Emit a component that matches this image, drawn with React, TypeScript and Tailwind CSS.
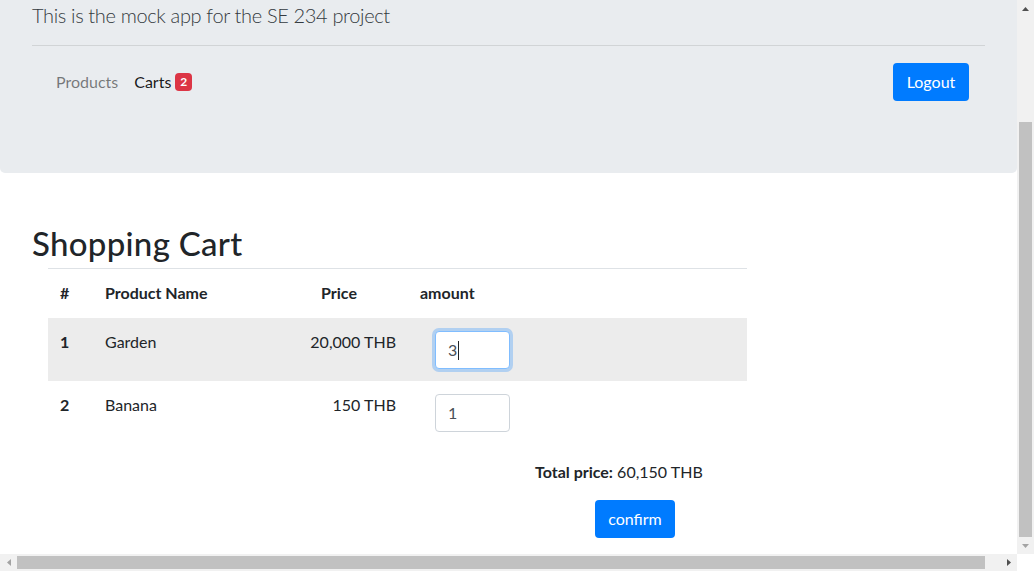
const cartItems = [
  { id: 1, name: 'Garden', price: '20,000 THB', amount: '3', focused: true },
  { id: 2, name: 'Banana', price: '150 THB', amount: '1', focused: false },
]

const font = 'font-["Lato","Noto_Sans",sans-serif]'

function Triangle({ dir, tone }: { dir: 'up' | 'down' | 'left' | 'right'; tone: string }) {
  const points = {
    up: '0,4 3.5,0 7,4',
    down: '0,0 7,0 3.5,4',
    left: '4,0 4,7 0,3.5',
    right: '0,0 4,3.5 0,7',
  }[dir]
  const size = dir === 'up' || dir === 'down' ? { w: 7, h: 4 } : { w: 4, h: 7 }
  return (
    <svg width={size.w} height={size.h} viewBox={`0 0 ${size.w} ${size.h}`}>
      <polygon points={points} fill={tone} />
    </svg>
  )
}

function Jumbotron() {
  return (
    <div className="w-[1017px] rounded-b-[5px] bg-[#e9ecef] px-[32px] pb-[64px]">
      <p className="text-[20px] leading-[30px] font-light tracking-[-0.35px] text-[#343a40]">
        This is the mock app for the SE 234 project
      </p>
      <hr className="mt-[15px] border-t border-[rgba(0,0,0,0.1)]" />
      <nav className="mt-[9px] flex h-[54px] items-center justify-between px-[16px] py-[8px]">
        <ul className="flex items-center text-[16px] leading-[24px]">
          <li className="px-[8px] text-[rgba(0,0,0,0.5)]">Products</li>
          <li className="flex items-center px-[8px] text-[rgba(0,0,0,0.9)]">
            Carts
            <span className="ml-[4px] inline-flex h-[18px] items-center rounded-[4px] bg-[#dc3545] px-[5px] text-[12px] leading-none font-bold text-white">
              2
            </span>
          </li>
        </ul>
        <button
          type="button"
          className="h-[38px] w-[76px] rounded-[4px] bg-[#007bff] text-[16px] leading-[24px] text-white"
        >
          Logout
        </button>
      </nav>
    </div>
  )
}

function CartTable() {
  return (
    <table className="ml-[16px] w-[699px] table-fixed border-t border-[#dee2e6] text-[16px] leading-[24px] text-[#212529]">
      <colgroup>
        <col className="w-[45px]" />
        <col className="w-[177px]" />
        <col className="w-[138px]" />
        <col />
      </colgroup>
      <thead>
        <tr>
          <th className="pt-[12px] pb-[13px] pl-[12px] text-left font-bold">#</th>
          <th className="pt-[12px] pb-[13px] pl-[12px] text-left font-bold">Product Name</th>
          <th className="pt-[12px] pb-[13px] text-center font-bold">Price</th>
          <th className="pt-[12px] pb-[13px] pl-[12px] text-left font-bold">amount</th>
        </tr>
      </thead>
      <tbody>
        {cartItems.map((item) => (
          <tr key={item.id} className={item.focused ? 'bg-[#ececec]' : ''}>
            <td className="pt-[12px] pl-[12px] align-top font-bold">{item.id}</td>
            <td className="pt-[12px] pl-[12px] align-top">{item.name}</td>
            <td className="pt-[12px] pr-[12px] text-right align-top">{item.price}</td>
            <td className="pt-[13px] pb-[12px] pl-[27px] align-top">
              <div
                className={`flex h-[38px] w-[75px] items-center rounded-[4px] border bg-white px-[12px] text-[16px] text-[#495057] ${
                  item.focused
                    ? 'border-[#80bdff] shadow-[0_0_0_3px_rgba(0,123,255,0.25)]'
                    : 'border-[#ced4da]'
                }`}
              >
                {item.amount}
                {item.focused && <span className="ml-[1px] h-[19px] w-px bg-[#212529]" />}
              </div>
            </td>
          </tr>
        ))}
      </tbody>
    </table>
  )
}

export default function App() {
  return (
    <div className={`flex h-[571px] w-[1034px] flex-col overflow-hidden bg-white ${font}`}>
      <div className="flex h-[554px]">
        <main className="w-[1017px] overflow-hidden">
          <Jumbotron />
          <section className="px-[32px] pt-[51px]">
            <h2 className="text-[33px] leading-[38px] font-medium tracking-[0.3px] text-[#212529]">
              Shopping Cart
            </h2>
            <div className="mt-[6px]">
              <CartTable />
            </div>
            <p className="mt-[16px] ml-[503px] text-[16px] leading-[24px] text-[#212529]">
              <span className="font-bold">Total price:</span> 60,150 THB
            </p>
            <button
              type="button"
              className="mt-[16px] ml-[563px] h-[38px] w-[80px] rounded-[4px] bg-[#007bff] text-[16px] leading-[24px] text-white"
            >
              confirm
            </button>
          </section>
        </main>
        <div className="flex w-[17px] flex-col items-center bg-[#f1f1f1]">
          <div className="flex h-[17px] items-center justify-center">
            <Triangle dir="up" tone="#505050" />
          </div>
          <div className="mt-[105px] h-[415px] w-[13px] bg-[#c1c1c1]" />
          <div className="flex h-[17px] items-center justify-center">
            <Triangle dir="down" tone="#a3a3a3" />
          </div>
        </div>
      </div>
      <div className="flex h-[17px]">
        <div className="flex w-[1017px] items-center bg-[#f1f1f1]">
          <div className="flex w-[17px] justify-center">
            <Triangle dir="left" tone="#a3a3a3" />
          </div>
          <div className="h-[13px] w-[968px] bg-[#c1c1c1]" />
          <div className="ml-auto flex w-[17px] justify-center">
            <Triangle dir="right" tone="#505050" />
          </div>
        </div>
        <div className="w-[17px] bg-white" />
      </div>
    </div>
  )
}
